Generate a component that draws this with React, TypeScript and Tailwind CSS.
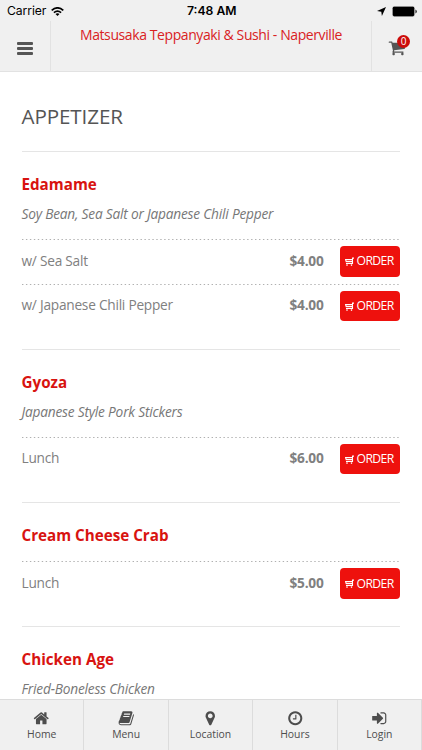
import React from "react";

const icons = {
  home: "M1472 992v480q0 26-19 45t-45 19h-384v-384h-256v384h-384q-26 0-45-19t-19-45v-480q0-1 .5-3t.5-3l575-474 575 474q1 2 1 6zm223-69l-62 74q-8 9-21 11h-3q-13 0-21-7l-692-577-692 577q-12 8-24 7-13-2-21-11l-62-74q-8-10-7-23.5t11-21.5l719-599q32-26 76-26t76 26l244 204v-195q0-14 9-23t23-9h192q14 0 23 9t9 23v408l219 182q10 8 11 21.5t-7 23.5z",
  book: "M1703 478q40 57 18 129l-275 906q-19 64-76.5 107.5t-122.5 43.5h-923q-77 0-148.5-53.5t-99.5-131.5q-24-67-2-127 0-4 3-27t4-37q1-8-3-21.5t-3-19.5q2-11 8-21t16.5-23.5 16.5-23.5q23-38 45-91.5t30-91.5q3-10 .5-30t-.5-28q3-11 17-28t17-23q21-36 42-92t25-90q1-9-2.5-32t.5-28q4-13 22-30.5t22-22.5q19-26 42.5-84.5t27.5-96.5q1-8-3-25.5t-2-26.5q2-8 9-18t18-23 17-21q8-12 16.5-30.5t15-35 16-36 19.5-32 26.5-23.5 36-11.5 47.5 5.5l-1 3q38-9 51-9h761q74 0 114 56t18 130l-274 906q-36 119-71.5 153.5t-128.5 34.5h-869q-27 0-38 15-11 16-1 43 24 70 144 70h923q29 0 56-15.5t35-41.5l300-987q7-22 5-57 38 15 59 43zm-1064 2q-4 13 2 22.5t20 9.5h608q13 0 25.5-9.5t16.5-22.5l21-64q4-13-2-22.5t-20-9.5h-608q-13 0-25.5 9.5t-16.5 22.5zm-83 256q-4 13 2 22.5t20 9.5h608q13 0 25.5-9.5t16.5-22.5l21-64q4-13-2-22.5t-20-9.5h-608q-13 0-25.5 9.5t-16.5 22.5z",
  marker: "M1152 640q0-106-75-181t-181-75-181 75-75 181 75 181 181 75 181-75 75-181zm256 0q0 109-33 179l-364 774q-16 33-47.5 52t-67.5 19-67.5-19-46.5-52l-365-774q-33-70-33-179 0-212 150-362t362-150 362 150 150 362z",
  clock: "M1024 544v448q0 14-9 23t-23 9h-320q-14 0-23-9t-9-23v-64q0-14 9-23t23-9h224v-352q0-14 9-23t23-9h64q14 0 23 9t9 23zm416 352q0-148-73-273t-198-198-273-73-273 73-198 198-73 273 73 273 198 198 273 73 273-73 198-198 73-273zm224 0q0 209-103 385.5t-279.5 279.5-385.5 103-385.5-103-279.5-279.5-103-385.5 103-385.5 279.5-279.5 385.5-103 385.5 103 279.5 279.5 103 385.5z",
  login: "M1312 896q0 26-19 45l-544 544q-19 19-45 19t-45-19-19-45v-288h-448q-26 0-45-19t-19-45v-384q0-26 19-45t45-19h448v-288q0-26 19-45t45-19 45 19l544 544q19 19 19 45zm352-352v704q0 119-84.5 203.5t-203.5 84.5h-320q-13 0-22.5-9.5t-9.5-22.5q0-4-1-20t-.5-26.5 3-23.5 10-19.5 20.5-6.5h320q66 0 113-47t47-113v-704q0-66-47-113t-113-47h-312l-11.5-1-11.5-3-8-5.5-7-9-2-13.5q0-4-1-20t-.5-26.5 3-23.5 10-19.5 20.5-6.5h320q119 0 203.5 84.5t84.5 203.5z",
  cart: "M704 1536q0 52-38 90t-90 38-90-38-38-90 38-90 90-38 90 38 38 90zm896 0q0 52-38 90t-90 38-90-38-38-90 38-90 90-38 90 38 38 90zm128-1088v512q0 24-16.5 42.5t-40.5 21.5l-1044 122q13 60 13 70 0 16-24 64h920q26 0 45 19t19 45-19 45-45 19h-1024q-26 0-45-19t-19-45q0-11 8-31.5t16-36 21.5-40 15.5-29.5l-177-823h-204q-26 0-45-19t-19-45 19-45 45-19h256q16 0 28.5 6.5t19.5 15.5 13 24.5 8 26 5.5 29.5 4.5 26h1201q26 0 45 19t19 45z",
};

function Icon({ name, className }: { name: keyof typeof icons; className: string }) {
  return (
    <svg viewBox="0 0 1792 1792" fill="currentColor" className={className}>
      <path d={icons[name]} />
    </svg>
  );
}

function StatusBar() {
  return (
    <div className="grid h-[21px] grid-cols-3 items-center pr-[5.5px] pl-[7px] font-['Inter',sans-serif] text-[12.2px] leading-[22px] text-black">
      <div className="flex items-center gap-[5px]">
        <span className="tracking-[-0.1px]">Carrier</span>
        <svg viewBox="0 0 13 9" className="h-[9px] w-[13px]" fill="none" stroke="currentColor" strokeWidth="1.7">
          <path d="M.7 3.4Q6.5-1.7 12.3 3.4M2.9 5.6Q6.5 2.5 10.1 5.6" />
          <path d="M4.5 7.1Q6.5 5.4 8.5 7.1L6.5 9z" fill="currentColor" stroke="none" />
        </svg>
      </div>
      <span className="text-center font-semibold whitespace-nowrap">7:48 AM</span>
      <div className="flex items-center justify-end gap-[6px]">
        <svg viewBox="0 0 9 9" className="h-[9px] w-[9px]" fill="currentColor">
          <path d="M9 0 4.9 9 4.3 4.7 0 4.1z" />
        </svg>
        <svg viewBox="0 0 25 11" className="h-[11px] w-[25px]">
          <rect x=".25" y=".25" width="22.5" height="10.5" rx="2" fill="#aaa" />
          <rect x=".8" y=".8" width="21.4" height="9.4" rx="1.4" />
          <path d="M23.5 3.5q1.2.5 1.2 2t-1.2 2z" />
        </svg>
      </div>
    </div>
  );
}

function Header() {
  return (
    <header className="h-[72px] border-b border-[#e2e2e2] bg-[#f0f0f0]">
      <StatusBar />
      <div className="flex h-[50px]">
        <button className="flex w-[51px] items-center justify-center border-r border-[#e2e2e2] pt-[5px]">
          <span className="flex flex-col gap-[2px]">
            <span className="h-[3px] w-4 rounded-[1px] bg-[#555]" />
            <span className="h-[3px] w-4 rounded-[1px] bg-[#555]" />
            <span className="h-[3px] w-4 rounded-[1px] bg-[#555]" />
          </span>
        </button>
        <h1 className="flex-1 pt-[3px] text-center text-[14px] leading-[22px] tracking-[-0.41px] whitespace-nowrap text-[#d9221f]">
          Matsusaka Teppanyaki &amp; Sushi - Naperville
        </h1>
        <button className="relative flex w-[51px] items-start border-l border-[#e2e2e2] pt-[18px] pl-[16px]">
          <Icon name="cart" className="h-[17.5px] w-[17.5px] text-[#555]" />
          <span className="absolute top-[14px] left-[25px] h-[13px] w-[13px] rounded-full bg-[#cc0c0a] text-center text-[10px] leading-[13px] text-white">
            0
          </span>
        </button>
      </div>
    </header>
  );
}

function OrderButton() {
  return (
    <button className="flex h-[30.5px] w-[60.5px] items-center rounded-[4px] bg-[#ee110d] pl-[5.5px] text-[12.2px] tracking-[-0.6px] text-white">
      <svg viewBox="0 0 9 9" className="mr-[2.5px] h-[9px] w-[9px]" fill="none" stroke="currentColor">
        <path d="M9 1.1H7.5V6.5H1M7.5 4.6H1.2L.6 2.6H7.5" strokeWidth="1.1" />
        <circle cx="2" cy="8.1" r=".8" fill="currentColor" stroke="none" />
        <circle cx="6.5" cy="8.1" r=".8" fill="currentColor" stroke="none" />
      </svg>
      ORDER
    </button>
  );
}

type Option = { label: string; price: string };
type Dish = { name: string; note?: string; options: Option[] };

const dishes: Dish[] = [
  {
    name: "Edamame",
    note: "Soy Bean, Sea Salt or Japanese Chili Pepper",
    options: [
      { label: "w/ Sea Salt", price: "$4.00" },
      { label: "w/ Japanese Chili Pepper", price: "$4.00" },
    ],
  },
  { name: "Gyoza", note: "Japanese Style Pork Stickers", options: [{ label: "Lunch", price: "$6.00" }] },
  { name: "Cream Cheese Crab", options: [{ label: "Lunch", price: "$5.00" }] },
  { name: "Chicken Age", note: "Fried-Boneless Chicken", options: [] },
];

function DottedRule() {
  return (
    <svg className="block h-px w-full" preserveAspectRatio="none">
      <line x1="0" y1=".5" x2="100%" y2=".5" stroke="#b0b0b0" strokeDasharray="1.4 2.55" />
    </svg>
  );
}

function DishSection({ dish }: { dish: Dish }) {
  return (
    <section className="border-t border-[#e5e5e5] pt-[20px] pb-[20.3px]">
      <h3 className="text-[15.2px] leading-6 font-bold text-[#d81310]">{dish.name}</h3>
      {dish.note && (
        <p className="h-[28.5px] pt-[7px] text-[13.7px] leading-[22px] tracking-[-0.2px] whitespace-nowrap text-[#777] italic">
          {dish.note}
        </p>
      )}
      <div className="pt-[14.5px]">
        {dish.options.map((o) => (
          <div key={o.label} className="h-[44.7px]">
            <DottedRule />
            <div className="flex h-[43px] items-center text-[13.7px] tracking-[-0.24px] text-[#808080]">
              <span className="flex-1 pb-px">{o.label}</span>
              <span className="mr-[16px] pb-px font-bold">{o.price}</span>
              <OrderButton />
            </div>
          </div>
        ))}
      </div>
    </section>
  );
}

const tabs: { icon: keyof typeof icons; label: string }[] = [
  { icon: "home", label: "Home" },
  { icon: "book", label: "Menu" },
  { icon: "marker", label: "Location" },
  { icon: "clock", label: "Hours" },
  { icon: "login", label: "Login" },
];

export default function App() {
  return (
    <div className="flex h-[750px] w-[422px] flex-col overflow-hidden bg-white font-['Open_Sans',sans-serif]">
      <Header />
      <main className="min-h-0 flex-1 overflow-hidden pr-[22px] pl-[21.5px]">
        <h2 className="h-[79px] pt-[29.4px] text-[20.6px] leading-[30px] tracking-[-0.1px] text-[#555]">APPETIZER</h2>
        {dishes.map((d) => (
          <DishSection key={d.name} dish={d} />
        ))}
      </main>
      <nav className="grid h-[51px] shrink-0 grid-cols-5 border-t border-[#dcdcdc] bg-[#f0f0f0] text-[#4d4d4d]">
        {tabs.map((t) => (
          <a key={t.label} className="flex flex-col items-center border-r border-[#dcdcdc] pt-[9.5px] text-[10.4px] leading-[15px]">
            <Icon name={t.icon} className="mb-px h-[16.5px] w-[16.5px]" />
            {t.label}
          </a>
        ))}
      </nav>
    </div>
  );
}
